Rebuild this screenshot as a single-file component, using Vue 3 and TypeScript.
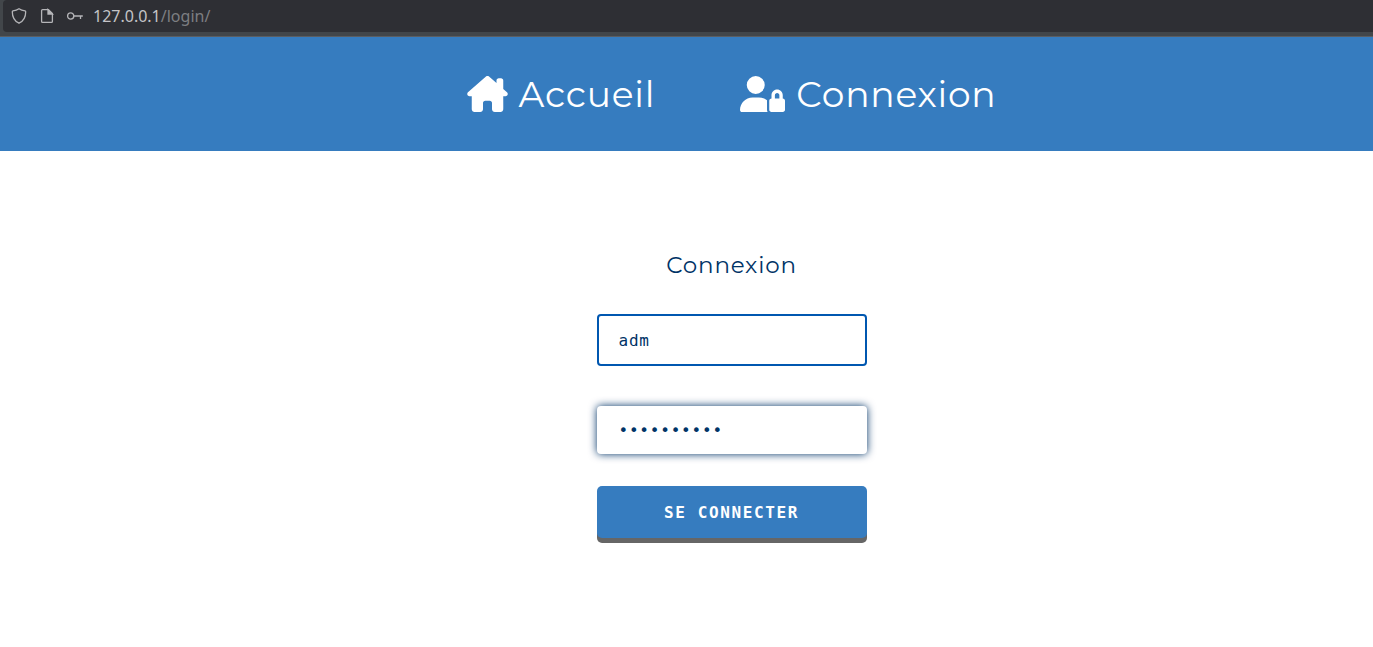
<script setup lang="ts">
import { ref } from 'vue'

const username = ref<string>('adm')
const password = ref<string>('adminadmin')
</script>

<template>
  <div class="page">
    <div class="browser-bar">
      <div class="address">
        <svg class="glyph" viewBox="0 0 16 16" aria-hidden="true">
          <path d="M8 .8C6.300 2 4 2.700 2 2.900 1.500 3 1.300 3.200 1.300 3.700c0 5.200 1.900 9.300 6.700 11.500 4.800-2.200 6.700-6.300 6.700-11.500 0-.5-.2-.7-.7-.8C12 2.700 9.700 2 8 .8z" />
        </svg>
        <svg class="glyph" viewBox="0 0 16 16" aria-hidden="true">
          <path d="M3.600 1.600h5.800l4 4v7.800a1 1 0 0 1-1 1H3.600a1 1 0 0 1-1-1V2.600a1 1 0 0 1 1-1z" />
          <path class="solid" d="M9 1.600v4.400h4.400z" />
        </svg>
        <svg class="glyph" viewBox="0 0 16 16" aria-hidden="true">
          <circle cx="3.700" cy="8" r="3.100" />
          <path d="M6.800 8h9M13.500 8v3" />
        </svg>
        <span class="url"><span class="host">127.0.0.1</span>/login/</span>
      </div>
    </div>

    <header class="site-header">
      <nav class="nav">
        <a class="nav-link" href="#accueil">
          <svg class="house" viewBox="0 0 576 512" aria-hidden="true">
            <path d="M575.8 255.5c0 18-15 32.100-32 32.100h-32l.7 160.200c0 2.700-.2 5.400-.5 8.100V472c0 22.100-17.900 40-40 40H456c-1.100 0-2.200 0-3.300-.1c-1.400.1-2.800.1-4.200.1H392c-22.100 0-40-17.900-40-40V384c0-17.700-14.300-32-32-32H256c-17.700 0-32 14.300-32 32v88c0 22.100-17.900 40-40 40H128.100c-1.500 0-3-.1-4.500-.2c-1.200.1-2.400.2-3.600.2H104c-22.100 0-40-17.900-40-40V360c0-.9 0-1.900.1-2.800V287.600H32c-18 0-32-14-32-32.100c0-9 3-17 10-24L266.400 8c7-7 15-8 22-8s15 2 21 7L416 100.700V64c0-17.700 14.300-32 32-32h32c17.700 0 32 14.300 32 32V185l52.800 46.400c8 7 12 15 11 24z" />
          </svg>
          <span>Accueil</span>
        </a>
        <a class="nav-link" href="#connexion">
          <svg class="user-lock" viewBox="0 0 640 512" aria-hidden="true">
            <path d="M224 256A128 128 0 1 0 224 0a128 128 0 1 0 0 256zm-45.700 48C79.800 304 0 383.800 0 482.300C0 498.700 13.300 512 29.700 512H392.600c-5.400-9.400-8.600-20.300-8.600-32V352c0-2.100.1-4.200.3-6.300c-31-26-71-41.700-114.600-41.700H178.300zM528 240c17.700 0 32 14.300 32 32v48H496V272c0-17.700 14.300-32 32-32zm-80 32v48c-17.700 0-32 14.300-32 32V480c0 17.700 14.300 32 32 32H608c17.700 0 32-14.300 32-32V352c0-17.700-14.300-32-32-32V272c0-44.200-35.800-80-80-80s-80 35.800-80 80z" />
          </svg>
          <span>Connexion</span>
        </a>
      </nav>
    </header>

    <main class="content">
      <form class="login" @submit.prevent>
        <h1 class="title">Connexion</h1>
        <input v-model="username" class="field active" type="text" aria-label="Nom d'utilisateur" autocomplete="username" />
        <input v-model="password" class="field raised" type="password" aria-label="Mot de passe" autocomplete="current-password" />
        <button class="submit" type="submit">Se connecter</button>
      </form>
    </main>
  </div>
</template>

<style>
body {
  margin: 0;
  background: #fff;
}
</style>

<style scoped>
.page {
  font-family: Montserrat, Inter, sans-serif;
  font-size: 16px;
  letter-spacing: 0.05em;
  color: #003366;
}

.browser-bar {
  box-sizing: border-box;
  padding: 0 0 4px 3px;
  background: #42464a;
  border-bottom: 1px solid #5b5e62;
}

.address {
  display: flex;
  align-items: center;
  gap: 12px;
  height: 32px;
  padding-left: 8px;
  background: #2e2f34;
  border-radius: 4px 0 0 4px;
  font-family: "Noto Sans", sans-serif;
  font-size: 16px;
  letter-spacing: normal;
  color: #7d7e82;
}

.glyph {
  width: 16px;
  height: 16px;
  fill: none;
  stroke: #b5b5b8;
  stroke-width: 1.3;
}

.glyph .solid {
  fill: #b5b5b8;
}

.url {
  margin-left: -2px;
}

.host {
  color: #c4c4c7;
}

.site-header {
  padding: 32px 0 32px 90px;
  background: #367cbf;
}

.nav {
  display: flex;
  justify-content: center;
  gap: 85px;
}

.nav-link {
  display: flex;
  align-items: center;
  gap: 11px;
  color: #fff;
  font-size: 36px;
  font-weight: 400;
  line-height: 50px;
  text-decoration: none;
}

.nav-link svg {
  height: 36px;
  fill: currentColor;
}

.house {
  width: 41px;
}

.user-lock {
  width: 45px;
}

.content {
  display: flex;
  justify-content: center;
  padding: 98px 0 40px 90px;
}

.login {
  display: flex;
  flex-direction: column;
  width: 270px;
}

.title {
  margin: 0 0 33px;
  font-size: 23px;
  font-weight: 400;
  line-height: 32px;
  text-align: center;
}

.field {
  box-sizing: border-box;
  width: 100%;
  padding: 0 20px;
  background: #fff;
  border: 2px solid transparent;
  border-radius: 4px;
  outline: none;
  color: #003366;
  font-family: "DejaVu Sans Mono", monospace;
  font-size: 16px;
  letter-spacing: 0.05em;
}

.active {
  height: 52px;
  margin-bottom: 40px;
  border-color: #0057b0;
}

.raised {
  height: 48px;
  margin-bottom: 32px;
  box-shadow: 0 0 8px #003366;
}

.submit {
  height: 52px;
  padding: 0;
  background: #367cbf;
  border: 0;
  border-radius: 5px;
  box-shadow: 0 5px 0 #666;
  color: #fff;
  font-family: "DejaVu Sans Mono", monospace;
  font-size: 16px;
  font-weight: 700;
  letter-spacing: 0.1em;
  text-transform: uppercase;
  cursor: pointer;
}
</style>
